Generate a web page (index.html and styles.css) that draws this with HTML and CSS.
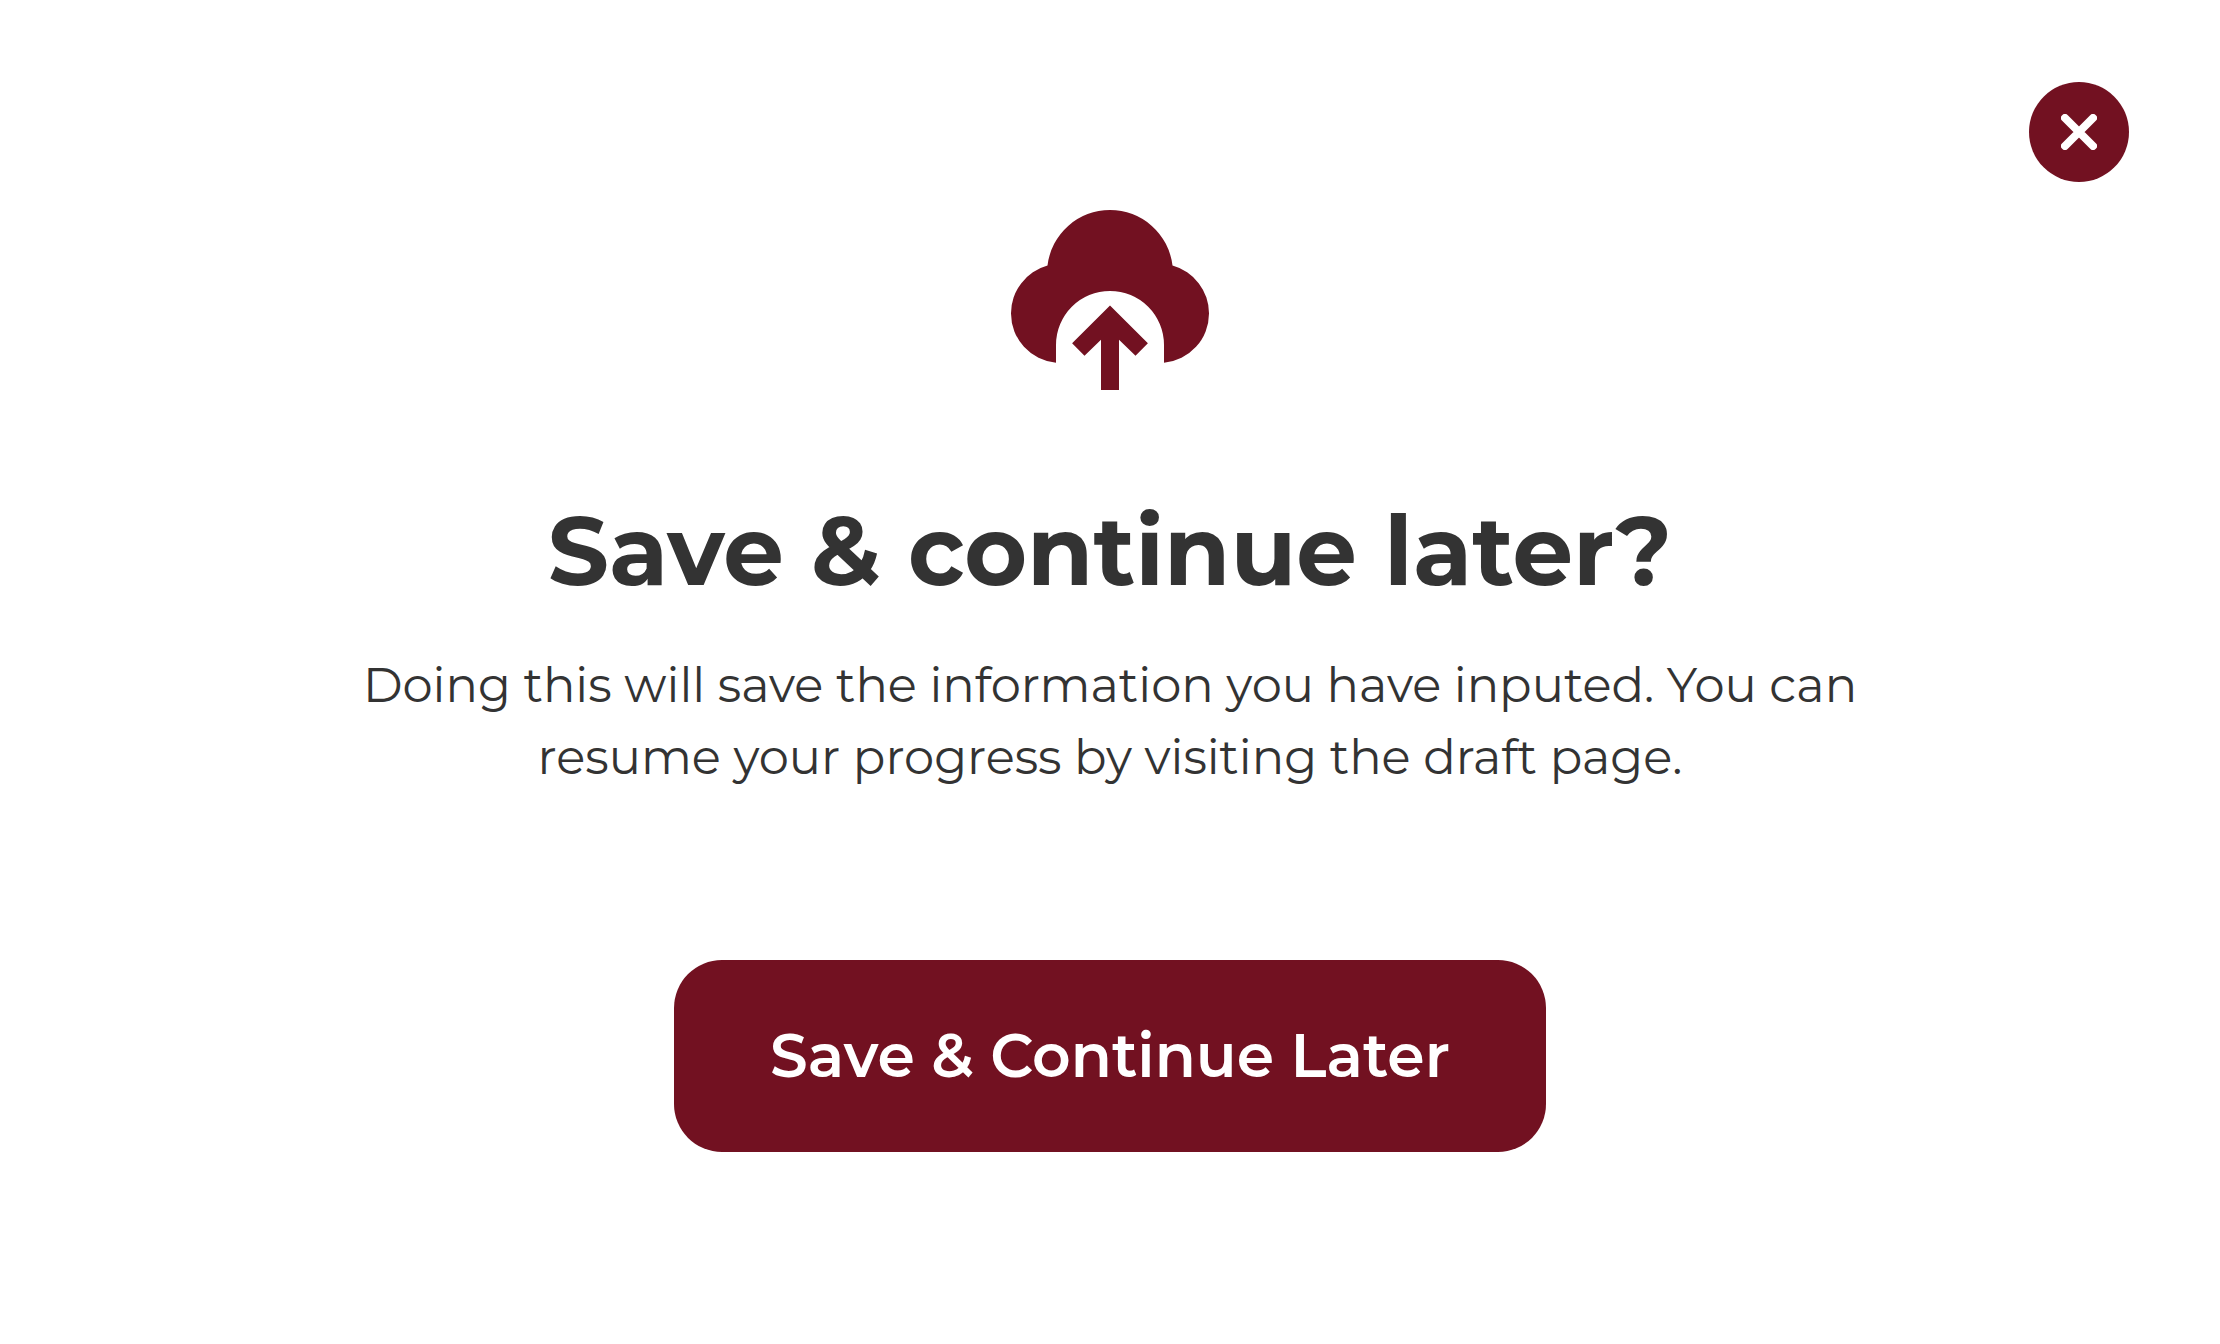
FILE: index.html
```html
<!DOCTYPE html>
<html lang="en">
<head>
<meta charset="utf-8">
<meta name="viewport" content="width=device-width, initial-scale=1">
<title>Save &amp; continue later?</title>
<link rel="stylesheet" href="styles.css">
</head>
<body>
<main class="dialog" role="dialog" aria-labelledby="dialog-title" aria-describedby="dialog-text">
  <header class="dialog-bar">
    <button class="close" type="button" aria-label="Close">
      <svg class="close-icon" viewBox="0 0 36 36" aria-hidden="true"><path d="M4 4L32 32M32 4L4 32"/></svg>
    </button>
  </header>
  <div class="dialog-body">
    <svg class="cloud" viewBox="0 0 198 180" aria-hidden="true">
      <path d="M36.5 55.6A62.9 62.9 0 0 1 99 0A62.9 62.9 0 0 1 161.5 55.6A49.6 49.6 0 0 1 198 103.5A49.6 49.6 0 0 1 153 152.8V135A54 54 0 0 0 45 135V152.8A49.6 49.6 0 0 1 0 103.5A49.6 49.6 0 0 1 36.5 55.6Z"/>
      <path d="M99 95.5L136.9 133.3L124.5 145.8L108 129.8V180H90V129.8L73.5 145.8L61.1 133.3Z"/>
    </svg>
    <h1 class="title" id="dialog-title">Save &amp; continue later?</h1>
    <p class="text" id="dialog-text">Doing this will save the information you have inputed. You can resume your progress by visiting the draft page.</p>
    <button class="save" type="button">Save &amp; Continue Later</button>
  </div>
</main>
</body>
</html>
```
FILE: styles.css
```css
* {
  box-sizing: border-box;
}

body {
  margin: 0;
  background: #fff;
  color: #333;
  font-family: Montserrat, Inter, sans-serif;
}

.dialog {
  min-height: 100vh;
  padding: 82px 91px 96px;
}

.dialog-bar {
  display: flex;
  justify-content: flex-end;
}

.close {
  display: grid;
  place-items: center;
  width: 100px;
  height: 100px;
  padding: 0;
  border: 0;
  border-radius: 50%;
  background: #721121;
  cursor: pointer;
}

.close-icon {
  width: 36px;
  height: 36px;
  fill: none;
  stroke: #fff;
  stroke-width: 8;
  stroke-linecap: round;
}

.dialog-body {
  display: flex;
  flex-direction: column;
  align-items: center;
  padding-top: 28px;
  text-align: center;
}

.cloud {
  width: 198px;
  height: 180px;
  fill: #721121;
}

.title {
  margin: 101px 0 38px;
  font-size: 96px;
  font-weight: 700;
  line-height: 120px;
}

.text {
  max-width: 1536px;
  margin: 0 0 167px;
  font-size: 48px;
  font-weight: 400;
  line-height: 72px;
}

.save {
  padding: 60px 96px;
  border: 0;
  border-radius: 48px;
  background: #721121;
  color: #fff;
  font-family: inherit;
  font-size: 60px;
  font-weight: 600;
  line-height: 72px;
  cursor: pointer;
}
```
